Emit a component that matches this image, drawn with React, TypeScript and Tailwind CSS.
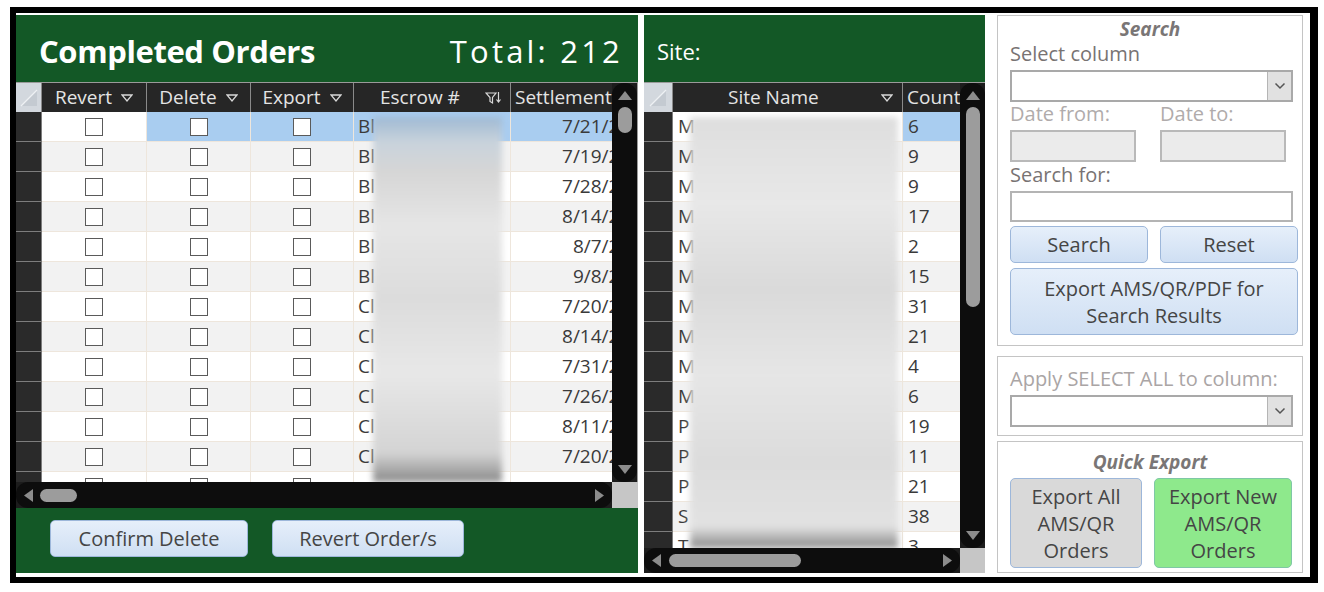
import React from "react";

const leftRows = [
  { e: "Bl", d: "7/21/2023" },
  { e: "Bl", d: "7/19/2023" },
  { e: "Bl", d: "7/28/2023" },
  { e: "Bl", d: "8/14/2023" },
  { e: "Bl", d: "8/7/2023" },
  { e: "Bl", d: "9/8/2023" },
  { e: "Cl", d: "7/20/2023" },
  { e: "Cl", d: "8/14/2023" },
  { e: "Cl", d: "7/31/2023" },
  { e: "Cl", d: "7/26/2023" },
  { e: "Cl", d: "8/11/2023" },
  { e: "Cl", d: "7/20/2023" },
  { e: "", d: "" },
];

const siteRows = [
  { n: "M", c: "6" },
  { n: "M", c: "9" },
  { n: "M", c: "9" },
  { n: "M", c: "17" },
  { n: "M", c: "2" },
  { n: "M", c: "15" },
  { n: "M", c: "31" },
  { n: "M", c: "21" },
  { n: "M", c: "4" },
  { n: "M", c: "6" },
  { n: "P", c: "19" },
  { n: "P", c: "11" },
  { n: "P", c: "21" },
  { n: "S", c: "38" },
  { n: "T", c: "3" },
];

function DropTri() {
  return (
    <svg width="12" height="8" viewBox="0 0 12 8" className="shrink-0">
      <polygon points="1,1 11,1 6,7" fill="none" stroke="#d8d8d8" strokeWidth="1.3" />
    </svg>
  );
}

function FilterIcon() {
  return (
    <svg width="16" height="14" viewBox="0 0 16 14" className="shrink-0">
      <path d="M1 2 H11 L7.5 6.5 V12 L5 10.5 V6.5 Z" fill="none" stroke="#d8d8d8" strokeWidth="1.2" />
      <path d="M13.5 1 V11 M11.5 8.5 L13.5 11 L15.5 8.5" fill="none" stroke="#d8d8d8" strokeWidth="1.2" />
    </svg>
  );
}

function CornerCell({ w }: { w: string }) {
  return (
    <div className={`${w} h-full shrink-0 bg-[#d3d8de] border-r border-[#8a8a8a] flex items-center justify-center`}>
      <svg width="22" height="22" viewBox="0 0 22 22">
        <polygon points="3,19 19,3 19,19" fill="#c4cad1" />
        <line x1="3" y1="19" x2="19" y2="3" stroke="#eef1f4" strokeWidth="1.2" />
      </svg>
    </div>
  );
}

function Checkbox() {
  return <div className="w-[18px] h-[18px] border-[1.5px] border-[#5a5a5a] bg-white" />;
}

function VScroll({ thumb }: { thumb: string }) {
  return (
    <div className="w-[25px] shrink-0 bg-[#1c1c1c] flex">
      <div className="flex-1 bg-[#0d0d0d] rounded-[12px] flex flex-col items-center pt-[8px] pb-[8px]">
        <svg width="14" height="9" viewBox="0 0 14 9">
          <polygon points="7,0 14,9 0,9" fill="#8c8c8c" />
        </svg>
        <div className={`mt-[7px] w-[14px] ${thumb} rounded-full bg-[#9c9c9c]`} />
        <div className="mt-auto">
          <svg width="14" height="9" viewBox="0 0 14 9">
            <polygon points="0,0 14,0 7,9" fill="#8c8c8c" />
          </svg>
        </div>
      </div>
    </div>
  );
}

function HScroll({ thumb, lead }: { thumb: string; lead: string }) {
  return (
    <div className="flex-1 bg-[#1c1c1c] flex">
      <div className="flex-1 bg-[#0d0d0d] rounded-[12px] flex items-center px-[8px]">
        <svg width="9" height="13" viewBox="0 0 9 13">
          <polygon points="0,6.5 9,0 9,13" fill="#8c8c8c" />
        </svg>
        <div className={`${lead} ${thumb} h-[13px] rounded-full bg-[#9c9c9c]`} />
        <div className="ml-auto">
          <svg width="9" height="13" viewBox="0 0 9 13">
            <polygon points="0,0 9,6.5 0,13" fill="#8c8c8c" />
          </svg>
        </div>
      </div>
    </div>
  );
}

function BlueButton({ children, className }: { children: React.ReactNode; className: string }) {
  return (
    <div
      className={`${className} rounded-[5px] border border-[#9db7da] bg-[linear-gradient(to_bottom,#e6effa,#cfdff3)] flex items-center justify-center text-center text-[#454545] leading-[27px]`}
    >
      {children}
    </div>
  );
}

function LeftPanel() {
  return (
    <div className="w-[622px] shrink-0 bg-[#135826] flex flex-col">
      <div className="h-[67px] flex items-center justify-between pl-[23px] pr-[15px] pt-[6px] text-white">
        <div className="text-[31px] font-bold tracking-[-0.4px]">Completed Orders</div>
        <div className="text-[31px] tracking-[3.2px]">Total: 212</div>
      </div>
      <div className="h-[426px] border-t border-[#9a9a9a] flex flex-col">
        <div className="flex h-[399px]">
          <div className="w-[596px] overflow-hidden flex flex-col">
            <div className="h-[29px] flex bg-[#262626] text-[#e4e4e4] text-[19px] shrink-0">
              <CornerCell w="w-[26px]" />
              <div className="w-[105px] shrink-0 border-r border-[#8a8a8a] flex items-center justify-center gap-[9px]">
                <span>Revert</span>
                <DropTri />
              </div>
              <div className="w-[104px] shrink-0 border-r border-[#8a8a8a] flex items-center justify-center gap-[9px]">
                <span>Delete</span>
                <DropTri />
              </div>
              <div className="w-[103px] shrink-0 border-r border-[#8a8a8a] flex items-center justify-center gap-[9px]">
                <span>Export</span>
                <DropTri />
              </div>
              <div className="w-[157px] shrink-0 border-r border-[#8a8a8a] flex items-center pl-[26px] pr-[9px]">
                <span>Escrow #</span>
                <span className="ml-auto">
                  <FilterIcon />
                </span>
              </div>
              <div className="w-[150px] shrink-0 flex items-center pl-[4px] whitespace-nowrap">Settlement Date</div>
            </div>
            <div className="relative flex-1 overflow-hidden">
              {leftRows.map((r, i) => {
                const bg = i % 2 === 0 ? "bg-white" : "bg-[#f2f2f2]";
                const sel = i === 0 ? "bg-[#a9cdf0]" : bg;
                return (
                  <div key={i} className="h-[30px] flex text-[19px] text-[#3a3a3a]">
                    <div className="w-[26px] shrink-0 bg-[#2a2a2a] border-b border-r border-[#7d7d7d]" />
                    <div className={`w-[105px] shrink-0 ${bg} border-r border-b border-[#eee6dc] flex items-center justify-center`}>
                      <Checkbox />
                    </div>
                    <div className={`w-[104px] shrink-0 ${sel} border-r border-b border-[#eee6dc] flex items-center justify-center`}>
                      <Checkbox />
                    </div>
                    <div className={`w-[103px] shrink-0 ${sel} border-r border-b border-[#eee6dc] flex items-center justify-center`}>
                      <Checkbox />
                    </div>
                    <div className={`w-[157px] shrink-0 ${sel} border-r border-b border-[#eee6dc] flex items-center pl-[4px]`}>
                      {r.e}
                    </div>
                    <div className={`w-[150px] shrink-0 ${sel} border-b border-[#eee6dc] flex items-center justify-end pr-[9px]`}>
                      {r.d}
                    </div>
                  </div>
                );
              })}
              <div className="absolute left-[357px] top-[5px] w-[129px] bottom-0 blur-[3px] bg-[linear-gradient(to_bottom,#9fb9d3,#c9d3dc_7%,#d6d6d6_15%,#e6e6e6_30%,#dcdcdc_50%,#e8e8e8_70%,#d4d4d4_92%,#8a8a8a)]" />
            </div>
          </div>
          <VScroll thumb="h-[26px]" />
          <div className="w-px bg-[#9a9a9a]" />
        </div>
        <div className="h-[26px] flex">
          <HScroll thumb="w-[37px]" lead="ml-[7px]" />
          <div className="w-[26px] bg-[#c6c6c6]" />
        </div>
      </div>
      <div className="flex-1 flex items-start pt-[12px] pl-[34px] gap-[24px] text-[20px]">
        <BlueButton className="w-[198px] h-[37px]">Confirm Delete</BlueButton>
        <BlueButton className="w-[192px] h-[37px]">Revert Order/s</BlueButton>
      </div>
    </div>
  );
}

function MiddlePanel() {
  return (
    <div className="w-[341px] shrink-0 bg-[#135826] flex flex-col">
      <div className="h-[67px] flex items-center pl-[13px] pt-[6px] text-white text-[22px]">Site:</div>
      <div className="flex-1 border-t border-[#9a9a9a] flex flex-col">
        <div className="flex h-[465px]">
          <div className="w-[316px] overflow-hidden flex flex-col">
            <div className="h-[29px] flex bg-[#262626] text-[#e4e4e4] text-[19px] shrink-0">
              <CornerCell w="w-[29px]" />
              <div className="w-[230px] shrink-0 border-r border-[#8a8a8a] flex items-center pl-[55px] pr-[9px]">
                <span>Site Name</span>
                <span className="ml-auto">
                  <DropTri />
                </span>
              </div>
              <div className="w-[80px] shrink-0 flex items-center pl-[4px]">Count</div>
            </div>
            <div className="relative flex-1 overflow-hidden">
              {siteRows.map((r, i) => {
                const bg = i % 2 === 0 ? "bg-white" : "bg-[#f2f2f2]";
                const sel = i === 0 ? "bg-[#a9cdf0]" : bg;
                return (
                  <div key={i} className="h-[30px] flex text-[19px] text-[#3a3a3a]">
                    <div className="w-[29px] shrink-0 bg-[#2a2a2a] border-b border-r border-[#7d7d7d]" />
                    <div className={`w-[230px] shrink-0 ${bg} border-r border-b border-[#eee6dc] flex items-center pl-[5px]`}>
                      {r.n}
                    </div>
                    <div className={`w-[80px] shrink-0 ${sel} border-b border-[#eee6dc] flex items-center pl-[5px]`}>
                      {r.c}
                    </div>
                  </div>
                );
              })}
              <div className="absolute left-[46px] top-[5px] w-[208px] bottom-0 blur-[3px] bg-[linear-gradient(to_bottom,#dedede,#e8e8e8_20%,#dadada_40%,#e6e6e6_60%,#dcdcdc_80%,#e2e2e2_95%,#8a8a8a)]" />
            </div>
          </div>
          <VScroll thumb="h-[200px]" />
        </div>
        <div className="flex-1 flex">
          <HScroll thumb="w-[132px]" lead="ml-[8px]" />
          <div className="w-[25px] bg-[#c6c6c6]" />
        </div>
      </div>
    </div>
  );
}

function SelectBox({ w }: { w: string }) {
  return (
    <div className={`${w} h-[32px] border-2 border-[#a9a9a9] bg-white flex justify-end`}>
      <div className="w-[24px] bg-[#e1e1e1] border-l border-[#b5b5b5] flex items-center justify-center">
        <svg width="12" height="8" viewBox="0 0 12 8">
          <path d="M1.5 1.5 L6 6 L10.5 1.5" fill="none" stroke="#555" strokeWidth="1.5" />
        </svg>
      </div>
    </div>
  );
}

function RightPanel() {
  return (
    <div className="w-[306px] shrink-0 flex flex-col">
      <div className="h-[331px] border border-[#c4c4c4] bg-white pl-[12px] flex flex-col">
        <div className="h-[26px] flex items-center justify-center pr-[12px] text-[19px] font-bold italic text-[#7a7676]">Search</div>
        <div className="h-[24px] flex items-center text-[20px] text-[#787373]">Select column</div>
        <div className="mt-[4px]">
          <SelectBox w="w-[283px]" />
        </div>
        <div className="h-[24px] flex items-center text-[20px] text-[#b0abab]">
          <span className="w-[150px]">Date from:</span>
          <span>Date to:</span>
        </div>
        <div className="mt-[4px] flex gap-[24px]">
          <div className="w-[126px] h-[32px] border-2 border-[#b9b9b9] bg-[#ebebeb]" />
          <div className="w-[126px] h-[32px] border-2 border-[#b9b9b9] bg-[#ebebeb]" />
        </div>
        <div className="mt-[1px] h-[24px] flex items-center text-[20px] text-[#787373]">Search for:</div>
        <div className="mt-[4px] w-[283px] h-[31px] border-2 border-[#b4b4b4] bg-white" />
        <div className="mt-[4px] flex gap-[12px] text-[20px]">
          <BlueButton className="w-[138px] h-[37px]">Search</BlueButton>
          <BlueButton className="w-[138px] h-[37px]">Reset</BlueButton>
        </div>
        <div className="mt-[5px] text-[20px]">
          <BlueButton className="w-[288px] h-[67px]">
            Export AMS/QR/PDF for
            <br />
            Search Results
          </BlueButton>
        </div>
      </div>
      <div className="mt-[10px] h-[80px] border border-[#c4c4c4] bg-white pl-[12px] pt-[10px] flex flex-col">
        <div className="h-[24px] flex items-center text-[20px] text-[#aaa5a5]">Apply SELECT ALL to column:</div>
        <div className="mt-[4px]">
          <SelectBox w="w-[283px]" />
        </div>
      </div>
      <div className="mt-[5px] flex-1 border border-[#c4c4c4] bg-white pl-[12px] pt-[8px] flex flex-col">
        <div className="h-[24px] flex items-center justify-center pr-[12px] text-[19px] font-bold italic text-[#7a7676]">Quick Export</div>
        <div className="mt-[4px] flex gap-[12px] text-[20px] text-[#454545] leading-[27px]">
          <div className="w-[132px] h-[90px] rounded-[5px] border border-[#9db7da] bg-[#d9d9d9] flex items-center justify-center text-center">
            Export All
            <br />
            AMS/QR
            <br />
            Orders
          </div>
          <div className="w-[138px] h-[90px] rounded-[5px] border border-[#7fc7a6] bg-[#8ee98c] flex items-center justify-center text-center">
            Export New
            <br />
            AMS/QR
            <br />
            Orders
          </div>
        </div>
      </div>
    </div>
  );
}

export default function App() {
  return (
    <div className="w-[1324px] h-[592px] bg-white font-['Open_Sans',sans-serif] pt-[7px] pl-[10px]">
      <div className="w-[1308px] h-[576px] border-black border-t-[6px] border-l-[6px] border-r-[8px] border-b-[6px] bg-white flex pt-[2px] pb-[4px] pr-[7px]">
        <LeftPanel />
        <div className="w-[6px] shrink-0" />
        <MiddlePanel />
        <div className="w-[12px] shrink-0" />
        <RightPanel />
      </div>
    </div>
  );
}
